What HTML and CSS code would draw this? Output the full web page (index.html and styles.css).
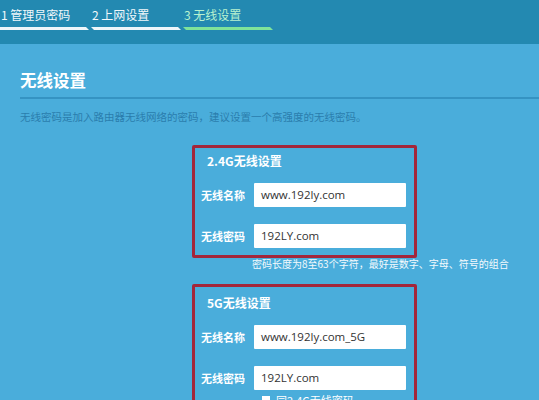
FILE: index.html
```html
<!DOCTYPE html>
<html lang="zh">
<head>
<meta charset="utf-8">
<link rel="stylesheet" href="styles.css">
</head>
<body>
<div class="topbar">
  <div class="step"><span class="step-text">1 管理员密码</span><span class="bar"></span></div>
  <div class="step"><span class="step-text">2 上网设置</span><span class="bar"></span></div>
  <div class="step active"><span class="step-text">3 无线设置</span><span class="bar"></span></div>
</div>
<div class="content">
  <h1 class="title">无线设置</h1>
  <div class="divider"></div>
  <p class="desc">无线密码是加入路由器无线网络的密码，建议设置一个高强度的无线密码。</p>
  <div class="form">
    <div class="box">
      <div class="box-title">2.4G无线设置</div>
      <div class="row"><span class="label">无线名称</span><span class="input">www.192ly.com</span></div>
      <div class="row"><span class="label">无线密码</span><span class="input">192LY.com</span></div>
    </div>
    <div class="hint">密码长度为8至63个字符，最好是数字、字母、符号的组合</div>
    <div class="box box2">
      <div class="box-title">5G无线设置</div>
      <div class="row"><span class="label">无线名称</span><span class="input">www.192ly.com_5G</span></div>
      <div class="row"><span class="label">无线密码</span><span class="input">192LY.com</span></div>
      <div class="check-row"><span class="checkbox"></span><span class="check-text">同2.4G无线密码</span></div>
    </div>
  </div>
</div>
</body>
</html>
```
FILE: styles.css
```css
* { box-sizing: border-box; }
html, body { margin: 0; padding: 0; }
body {
  width: 539px;
  height: 400px;
  overflow: hidden;
  background: #4aaddb;
  font-family: "Noto Sans CJK SC", "Noto Sans", sans-serif;
  color: #fff;
}
.topbar {
  height: 44px;
  background: #2389b1;
  display: flex;
  gap: 2px;
  padding-top: 7px;
}
.step {
  display: flex;
  flex-direction: column;
  width: 90px;
}
.step:first-child { width: 89px; }
.step-text {
  font-size: 12px;
  line-height: 16px;
  height: 16px;
  padding-left: 1px;
  color: #f2f8fb;
  white-space: nowrap;
}
.bar {
  margin-top: 4px;
  height: 3px;
  background: #eef6fa;
  clip-path: polygon(0 0, calc(100% - 3px) 0, 100% 100%, 3px 100%);
}
.step:first-child .bar { clip-path: polygon(0 0, calc(100% - 3px) 0, 100% 100%, 0 100%); }
.step.active .step-text { color: #b8f2cf; }
.step.active .bar { background: #7fe39a; }
.content {
  padding: 26px 0 0 20px;
}
.title {
  margin: 0;
  font-size: 16.5px;
  line-height: 20px;
  font-weight: bold;
  color: #fff;
}
.divider {
  margin-top: 7px;
  height: 2px;
  background: #3593c2;
}
.desc {
  margin: 10px 0 0;
  font-size: 10.5px;
  line-height: 16px;
  color: #2a7dad;
}
.form {
  margin-top: 20px;
  margin-left: 172px;
  width: 225px;
}
.box {
  border: 3px solid #a3263b;
  border-radius: 2px;
  padding: 5px 0 7px 6px;
}
.box-title {
  font-size: 12px;
  font-weight: bold;
  line-height: 16px;
  padding-left: 6px;
}
.row {
  display: flex;
  align-items: center;
  height: 24px;
}
.box-title + .row { margin-top: 14px; }
.row + .row { margin-top: 17px; }
.label {
  width: 53px;
  font-size: 11px;
  font-weight: bold;
  line-height: 14px;
}
.input {
  width: 152px;
  height: 24px;
  background: #fff;
  color: #333;
  font-family: "Open Sans", "Noto Sans", sans-serif;
  font-size: 11.5px;
  line-height: 24px;
  padding-left: 7px;
  border-radius: 1px;
}
.hint {
  margin-left: 60px;
  font-size: 10px;
  line-height: 14px;
  margin-top: -1px;
  white-space: nowrap;
  color: #f4fafd;
}
.box2 {
  margin-top: 13px;
  padding-top: 8px;
}
.check-row {
  display: flex;
  align-items: center;
  gap: 6px;
  margin-top: 3px;
  padding-left: 61px;
  font-size: 11px;
  line-height: 14px;
}
.checkbox {
  width: 8px;
  height: 8px;
  background: #fff;
}
```
